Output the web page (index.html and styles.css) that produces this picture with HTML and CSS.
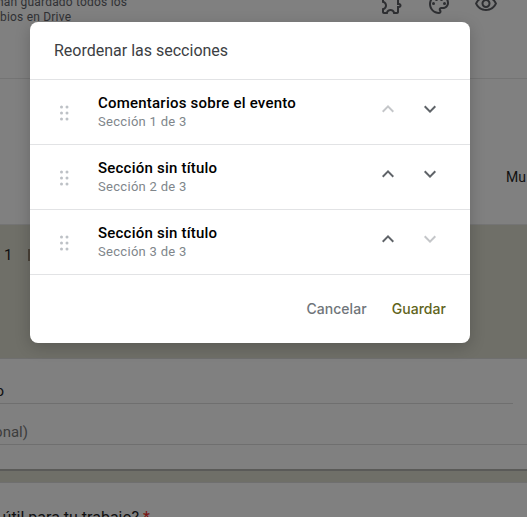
FILE: index.html
```html
<!DOCTYPE html>
<html lang="es">
<head>
<meta charset="UTF-8" />
<meta name="viewport" content="width=device-width, initial-scale=1" />
<title>Reordenar las secciones</title>
<link rel="stylesheet" href="styles.css">
</head>
<body>
  <!-- form editor behind the dialog -->
  <header class="topbar">
    <div class="saved"><span>han guardado todos los</span><span class="saved-end">bios en Drive</span></div>
    <div class="tools">
      <svg viewBox="0 0 24 24"><path d="M10.5 4.5c.28 0 .5.22.5.5v2h6v6h2c.28 0 .5.22.5.5s-.22.5-.5.5h-2v6h-2.12c-.68-1.75-2.39-3-4.38-3s-3.7 1.25-4.38 3H4v-2.12c1.75-.68 3-2.39 3-4.38 0-1.99-1.24-3.7-2.99-4.38L4 7h6V5c0-.28.22-.5.5-.5m0-2C9.12 2.5 8 3.62 8 5H4c-1.1 0-1.99.9-1.99 2v3.8h.29c1.49 0 2.7 1.21 2.7 2.7s-1.21 2.7-2.7 2.7H2V20c0 1.1.9 2 2 2h3.8v-.3c0-1.49 1.21-2.7 2.7-2.7s2.7 1.21 2.7 2.7v.3H17c1.1 0 2-.9 2-2v-4c1.38 0 2.5-1.12 2.5-2.5S20.38 11 19 11V7c0-1.1-.9-2-2-2h-4c0-1.38-1.12-2.5-2.5-2.5z"/></svg>
      <svg viewBox="0 0 24 24"><path d="M12 22C6.49 22 2 17.51 2 12S6.49 2 12 2s10 4.04 10 9c0 3.31-2.69 6-6 6h-1.77c-.28 0-.5.22-.5.5 0 .12.05.23.13.33.41.47.64 1.06.64 1.67 0 1.38-1.12 2.5-2.5 2.5zm0-18c-4.41 0-8 3.59-8 8s3.59 8 8 8c.28 0 .5-.22.5-.5 0-.16-.08-.28-.14-.35-.41-.46-.63-1.05-.63-1.65 0-1.38 1.12-2.5 2.5-2.5H16c2.21 0 4-1.79 4-4 0-3.86-3.59-7-8-7z"/><circle cx="6.5" cy="11.5" r="1.5"/><circle cx="9.5" cy="7.5" r="1.5"/><circle cx="14.5" cy="7.5" r="1.5"/><circle cx="17.5" cy="11.5" r="1.5"/></svg>
      <svg viewBox="0 0 24 24"><path d="M12 6c3.79 0 7.17 2.13 8.82 5.5C19.17 14.87 15.79 17 12 17s-7.17-2.13-8.82-5.5C4.83 8.13 8.21 6 12 6m0-2C7 4 2.73 7.11 1 11.5 2.73 15.89 7 19 12 19s9.27-3.11 11-7.5C21.27 7.11 17 4 12 4zm0 5c1.38 0 2.5 1.12 2.5 2.5S13.38 14 12 14s-2.5-1.12-2.5-2.5S10.62 9 12 9m0-2c-2.48 0-4.5 2.02-4.5 4.5S9.52 16 12 16s4.5-2.02 4.5-4.5S14.48 7 12 7z"/></svg>
    </div>
  </header>

  <div class="tabs"><span>Mu</span></div>

  <div class="band">
    <span class="page-num">1</span><span class="page-mark"></span>
  </div>

  <section class="card">
    <div class="field field-short"><span class="clip">Sección sin título</span></div>
    <div class="field field-hint"><span class="clip clip-hint">Descripción (opcional)</span></div>
  </section>

  <div class="spacer"></div>

  <section class="question">
    <span class="clip clip-question">¿Te resultó útil para tu trabajo? <b>*</b></span>
  </section>

  <!-- dialog -->
  <div class="dialog">
    <h2 class="dialog-title">Reordenar las secciones</h2>

    <div class="row">
      <svg class="handle" viewBox="0 0 9 16"><circle cx="1.5" cy="2" r="1.5"/><circle cx="7" cy="2" r="1.5"/><circle cx="1.5" cy="8" r="1.5"/><circle cx="7" cy="8" r="1.5"/><circle cx="1.5" cy="14" r="1.5"/><circle cx="7" cy="14" r="1.5"/></svg>
      <div class="row-text">
        <div class="row-name">Comentarios sobre el evento</div>
        <div class="row-sub">Sección 1 de 3</div>
      </div>
      <div class="arrows">
        <svg class="off" viewBox="0 0 24 24"><path d="M12 8l-6 6 1.41 1.41L12 10.83l4.59 4.58L18 14z"/></svg>
        <svg viewBox="0 0 24 24"><path d="M16.59 8.59L12 13.17 7.41 8.59 6 10l6 6 6-6z"/></svg>
      </div>
    </div>

    <div class="row">
      <svg class="handle" viewBox="0 0 9 16"><circle cx="1.5" cy="2" r="1.5"/><circle cx="7" cy="2" r="1.5"/><circle cx="1.5" cy="8" r="1.5"/><circle cx="7" cy="8" r="1.5"/><circle cx="1.5" cy="14" r="1.5"/><circle cx="7" cy="14" r="1.5"/></svg>
      <div class="row-text">
        <div class="row-name">Sección sin título</div>
        <div class="row-sub">Sección 2 de 3</div>
      </div>
      <div class="arrows">
        <svg viewBox="0 0 24 24"><path d="M12 8l-6 6 1.41 1.41L12 10.83l4.59 4.58L18 14z"/></svg>
        <svg viewBox="0 0 24 24"><path d="M16.59 8.59L12 13.17 7.41 8.59 6 10l6 6 6-6z"/></svg>
      </div>
    </div>

    <div class="row">
      <svg class="handle" viewBox="0 0 9 16"><circle cx="1.5" cy="2" r="1.5"/><circle cx="7" cy="2" r="1.5"/><circle cx="1.5" cy="8" r="1.5"/><circle cx="7" cy="8" r="1.5"/><circle cx="1.5" cy="14" r="1.5"/><circle cx="7" cy="14" r="1.5"/></svg>
      <div class="row-text">
        <div class="row-name">Sección sin título</div>
        <div class="row-sub">Sección 3 de 3</div>
      </div>
      <div class="arrows">
        <svg viewBox="0 0 24 24"><path d="M12 8l-6 6 1.41 1.41L12 10.83l4.59 4.58L18 14z"/></svg>
        <svg class="off" viewBox="0 0 24 24"><path d="M16.59 8.59L12 13.17 7.41 8.59 6 10l6 6 6-6z"/></svg>
      </div>
    </div>

    <div class="dialog-actions">
      <button class="btn btn-cancel">Cancelar</button>
      <button class="btn btn-save">Guardar</button>
    </div>
  </div>
</body>
</html>
```

FILE: styles.css
```css
:root {
  --scrim-gray: #808080;
  --scrim-olive: #6f6f68;
  --scrim-line: #747474;
  --divider: #e2e3e5;
  --icon: #5f6368;
  --icon-off: #c4c6c9;
}
html, body {
  height: 517px;
  overflow: hidden;
}
body {
  position: relative;
  margin: 0;
  font-family: Roboto, 'Liberation Sans', sans-serif;
  background: var(--scrim-gray);
  color: #101010;
}

/* page behind the dialog */
.topbar {
  display: flex;
  justify-content: space-between;
  height: 79px;
  box-sizing: border-box;
  border-bottom: 1px solid var(--scrim-line);
}
.saved {
  display: flex;
  flex-direction: column;
  margin: -5px 0 0 -3px;
  font-size: 12px;
  line-height: 15px;
  letter-spacing: 0.2px;
  color: #303134;
}
.saved-end {
  margin-left: 3px;
}
.tools {
  display: flex;
  gap: 23px;
  margin: -8px 29px 0 0;
}
.tools svg {
  width: 24px;
  height: 24px;
  fill: #2e2f32;
}
.tabs {
  display: flex;
  justify-content: flex-start;
  height: 146px;
  box-sizing: border-box;
  padding: 89px 0 0 506px;
  font-size: 14px;
  line-height: 18px;
  white-space: nowrap;
  border-bottom: 1px solid var(--scrim-line);
}
.band {
  display: flex;
  align-items: flex-start;
  height: 133px;
  box-sizing: border-box;
  padding: 21px 0 0 4px;
  background: var(--scrim-olive);
  font-size: 15px;
  line-height: 18px;
}
.page-mark {
  width: 2px;
  height: 12px;
  margin: 3px 0 0 16px;
  background: #4a4238;
}
.card {
  height: 113px;
  box-sizing: border-box;
  border-top: 1px solid #6f6f6f;
  border-bottom: 2px solid #5a5a58;
}
.field {
  box-sizing: border-box;
  border-bottom: 1px solid #6f6f6f;
  font-size: 15px;
  line-height: 18px;
}
.field-short {
  height: 45px;
  padding-top: 23px;
  margin-right: 14px;
}
.field-hint {
  height: 41px;
  padding-top: 19px;
  color: #3d3d3d;
}
.clip {
  display: flex;
  justify-content: flex-end;
  width: 4px;
  white-space: nowrap;
}
.clip-hint {
  width: 28px;
}
.spacer {
  height: 11px;
  background: var(--scrim-olive);
  border-bottom: 1px solid #6f6f6f;
}
.question {
  padding-top: 25px;
  font-size: 16px;
  line-height: 20px;
}
.clip-question {
  width: 150px;
  gap: 4px;
}
.clip-question b {
  font-weight: 400;
  color: #7a1410;
}

/* dialog */
.dialog {
  position: absolute;
  top: 22px;
  left: 30px;
  width: 440px;
  height: 321px;
  background: #fff;
  border-radius: 8px;
  box-shadow: 0 4px 16px rgba(0, 0, 0, 0.2);
  color: #000;
}
.dialog-title {
  margin: 0;
  height: 57px;
  box-sizing: border-box;
  padding: 19px 0 0 24px;
  font-size: 16px;
  font-weight: 400;
  line-height: 20px;
  color: #3c4043;
}
.row {
  display: flex;
  align-items: center;
  height: 65px;
  box-sizing: border-box;
  border-top: 1px solid var(--divider);
}
.handle {
  flex: none;
  width: 9px;
  height: 16px;
  margin: 1px 0 0 30px;
  fill: #bdc1c6;
}
.row-text {
  flex: 1;
  margin-left: 29px;
  padding-bottom: 1px;
}
.row-name {
  font-size: 15px;
  font-weight: 500;
  line-height: 20px;
  letter-spacing: 0.22px;
}
.row-sub {
  margin-top: 1px;
  font-size: 13px;
  line-height: 16px;
  letter-spacing: 0.3px;
  color: #80868b;
}
.arrows {
  display: flex;
  gap: 18px;
  padding: 0 28px 6px 0;
}
.arrows svg {
  width: 24px;
  height: 24px;
  fill: var(--icon);
}
.arrows .off {
  fill: var(--icon-off);
}
.dialog-actions {
  display: flex;
  justify-content: flex-end;
  gap: 25px;
  box-sizing: border-box;
  height: 70px;
  padding: 25px 24px 0 0;
  border-top: 1px solid var(--divider);
}
.btn {
  padding: 0;
  height: 18px;
  border: none;
  background: none;
  font-family: Inter, Roboto, sans-serif;
  font-size: 14px;
  font-weight: 500;
  line-height: 18px;
  letter-spacing: 0.05px;
  cursor: pointer;
}
.btn-cancel {
  color: #70757a;
}
.btn-save {
  color: #5f6420;
}
```
